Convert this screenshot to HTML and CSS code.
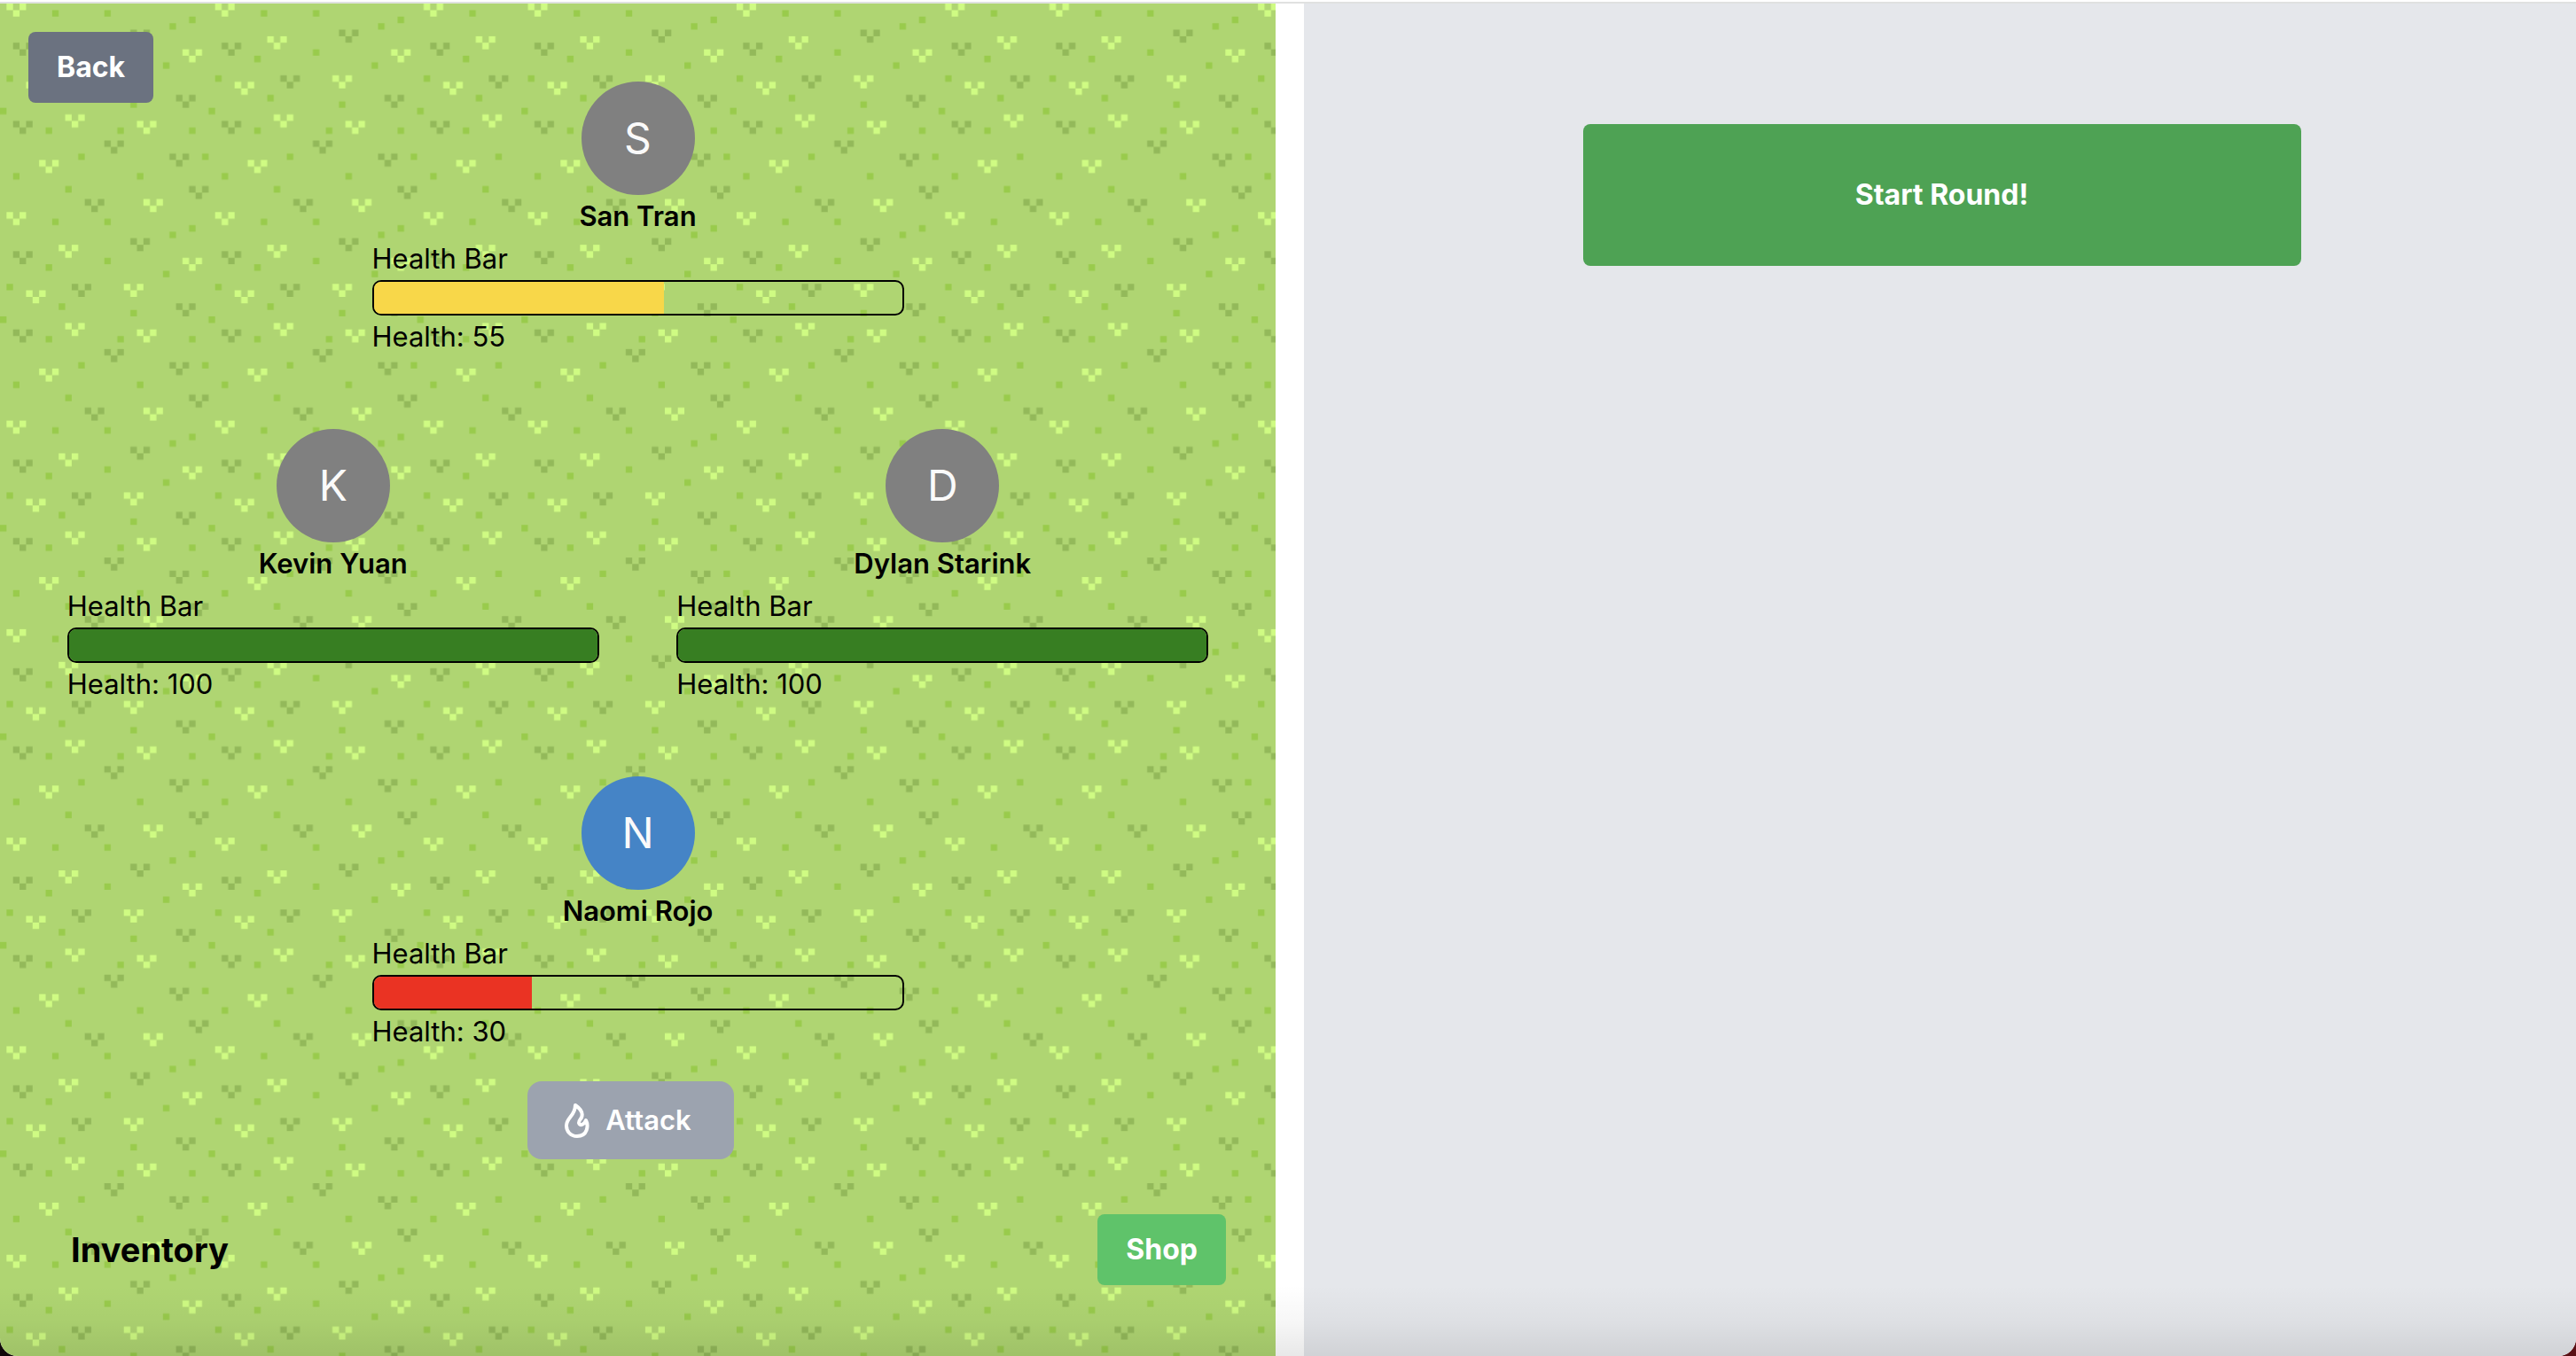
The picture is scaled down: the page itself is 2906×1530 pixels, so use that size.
FILE: index.html
```
<!DOCTYPE html>
<html lang="en">
<head>
<meta charset="utf-8">
<title>Battle</title>
<link rel="stylesheet" href="styles.css">
</head>
<body>
<div class="page">
  <main class="board">
    <section class="arena">
      <svg class="grass" aria-hidden="true">
        <defs>
          <path id="tuft" d="M0 0h1v1h-1zM2 0h1v1h-1zM1 1h1v1h-1z"/>
          <g id="patch-a">
            <g fill="#cffb83">
              <use href="#tuft" x="1" y="0"/><use href="#tuft" x="9" y="5"/><use href="#tuft" x="4" y="12"/><use href="#tuft" x="10" y="17"/><use href="#tuft" x="6" y="24"/>
            </g>
            <g fill="#93b95a">
              <use href="#tuft" x="2" y="6"/><use href="#tuft" x="11" y="11"/><use href="#tuft" x="2" y="18"/><use href="#tuft" x="13" y="30"/>
            </g>
            <path fill="#99cb4c" d="M8 1h1v1h-1zM7 8h1v1h-1zM1 11h1v1h-1zM9 14h1v1h-1zM0 16h1v1h-1zM7 19h1v1h-1zM12 23h1v1h-1zM2 26h1v1h-1zM10 28h1v1h-1z"/>
          </g>
          <g id="patch-b">
            <g fill="#cffb83">
              <use href="#tuft" x="12" y="7"/><use href="#tuft" x="3" y="11"/><use href="#tuft" x="5" y="18"/><use href="#tuft" x="6" y="30"/>
            </g>
            <g fill="#93b95a">
              <use href="#tuft" x="4" y="4"/><use href="#tuft" x="11" y="14"/><use href="#tuft" x="0" y="21"/><use href="#tuft" x="10" y="23"/><use href="#tuft" x="13" y="28"/>
            </g>
            <path fill="#99cb4c" d="M0 1h1v1h-1zM13 2h1v1h-1zM10 3h1v1h-1zM0 7h1v1h-1zM9 9h1v1h-1zM4 15h1v1h-1zM2 19h1v1h-1zM13 19h1v1h-1zM15 23h1v1h-1zM5 26h1v1h-1z"/>
          </g>
          <pattern id="meadow" width="80" height="32" patternUnits="userSpaceOnUse" patternTransform="scale(7.353)">
            <use href="#patch-a"/><use href="#patch-b" x="16"/><use href="#patch-a" x="32"/><use href="#patch-b" x="48"/><use href="#patch-a" x="64"/>
          </pattern>
        </defs>
        <rect width="100%" height="100%" fill="url(#meadow)"/>
      </svg>

      <button class="btn btn-back" type="button">Back</button>

      <div class="players">
        <article class="player player-solo">
          <div class="avatar">S</div>
          <h2 class="name">San Tran</h2>
          <div class="health">
            <p>Health Bar</p>
            <div class="bar"><div class="fill fill-mid" style="width:55%"></div></div>
            <p>Health: 55</p>
          </div>
        </article>
        <article class="player">
          <div class="avatar">K</div>
          <h2 class="name">Kevin Yuan</h2>
          <div class="health">
            <p>Health Bar</p>
            <div class="bar"><div class="fill fill-high" style="width:100%"></div></div>
            <p>Health: 100</p>
          </div>
        </article>
        <article class="player">
          <div class="avatar">D</div>
          <h2 class="name">Dylan Starink</h2>
          <div class="health">
            <p>Health Bar</p>
            <div class="bar"><div class="fill fill-high" style="width:100%"></div></div>
            <p>Health: 100</p>
          </div>
        </article>
        <article class="player player-solo">
          <div class="avatar avatar-self">N</div>
          <h2 class="name">Naomi Rojo</h2>
          <div class="health">
            <p>Health Bar</p>
            <div class="bar"><div class="fill fill-low" style="width:30%"></div></div>
            <p>Health: 30</p>
          </div>
        </article>
      </div>

      <button class="btn-attack" type="button">
        <svg class="flame" viewBox="0 0 28 40" aria-hidden="true"><path d="M12 3C18 7 21 12 19 17C18 19 16 20 16 23C17 27 22 25 24 20C27 26 26 38 14 38C6 38 2 32 2 26C2 17 12 15 12 3Z"/></svg>
        <span>Attack</span>
      </button>

      <div class="footer">
        <h1 class="inventory">Inventory</h1>
        <button class="btn btn-shop" type="button">Shop</button>
      </div>
    </section>

    <section class="round">
      <button class="btn-start" type="button">Start Round!</button>
    </section>
  </main>
</div>
</body>
</html>
```
FILE: styles.css
```
* {
  box-sizing: border-box;
}

html {
  background: #10080a;
}

body,
h1,
h2,
p {
  margin: 0;
}

body {
  font-family: Inter, "Liberation Sans", sans-serif;
  font-size: 31px;
  line-height: 48px;
  color: #000;
  background: linear-gradient(90deg, #10080a 50%, #5a1015 50%);
}

button {
  border: 0;
  font: inherit;
  color: #fff;
  cursor: pointer;
}

.page {
  position: relative;
  display: flex;
  min-height: 100vh;
  padding-top: 2px;
  overflow: hidden;
  background: #fff;
  border-radius: 0 0 20px 20px;
}

/* Soft shade along the bottom edge of the window */
.page::after {
  content: "";
  position: absolute;
  inset: auto 0 0;
  height: 80px;
  background: linear-gradient(transparent, rgba(0, 0, 0, 0.03) 50%, rgba(0, 0, 0, 0.09));
  pointer-events: none;
}

.board {
  flex: 1;
  display: grid;
  grid-template-columns: 1fr 1fr;
  gap: 32px;
  margin-right: -4px;
  border-top: 2px solid #e0e1e0;
}

.arena {
  position: relative;
  isolation: isolate;
  display: flex;
  flex-direction: column;
  padding: 32px;
  background: #afd572;
}

.grass {
  position: absolute;
  inset: 0;
  z-index: -1;
  width: 100%;
  height: 100%;
}

.btn {
  padding: 16px 32px;
  border-radius: 8px;
  font-size: 32px;
  font-weight: 700;
}

.btn-back {
  align-self: flex-start;
  margin-bottom: -24px;
  background: #6b7280;
}

.players {
  display: grid;
  grid-template-columns: 1fr 1fr;
  row-gap: 80px;
}

.player {
  display: flex;
  flex-direction: column;
  align-items: center;
}

.player-solo {
  grid-column: 1 / -1;
}

.avatar {
  display: flex;
  align-items: center;
  justify-content: center;
  width: 128px;
  height: 128px;
  border-radius: 50%;
  background: #808080;
  color: #fafafa;
  font-size: 48px;
}

.avatar-self {
  background: #4584c6;
}

.name {
  font-size: 31px;
  font-weight: 600;
}

.health {
  width: 600px;
  max-width: 100%;
}

.bar {
  height: 40px;
  overflow: hidden;
  border: 2px solid #000;
  border-radius: 10px;
}

.fill {
  height: 100%;
}

.fill-high {
  background: #377e22;
}

.fill-mid {
  background: #f8d749;
}

.fill-low {
  background: #ea3323;
}

.btn-attack {
  align-self: center;
  display: flex;
  align-items: center;
  gap: 18px;
  margin: 32px 16px 0 0;
  padding: 20px 48px 20px 42px;
  border-radius: 16px;
  background: #9ca3af;
  font-weight: 600;
}

.flame {
  width: 28px;
  height: 40px;
  fill: none;
  stroke: #fff;
  stroke-width: 4;
  stroke-linejoin: round;
}

.footer {
  display: flex;
  align-items: center;
  justify-content: space-between;
  margin-top: 62px;
  padding: 0 24px 0 48px;
}

.inventory {
  font-size: 38px;
  font-weight: 700;
}

.btn-shop {
  background: #5fc36a;
}

.round {
  display: flex;
  flex-direction: column;
  align-items: center;
  padding-top: 136px;
  background: #e5e7eb;
}

.btn-start {
  width: 810px;
  max-width: 100%;
  padding: 56px 32px;
  border-radius: 8px;
  background: #4ea254;
  font-size: 32px;
  font-weight: 700;
}
```
